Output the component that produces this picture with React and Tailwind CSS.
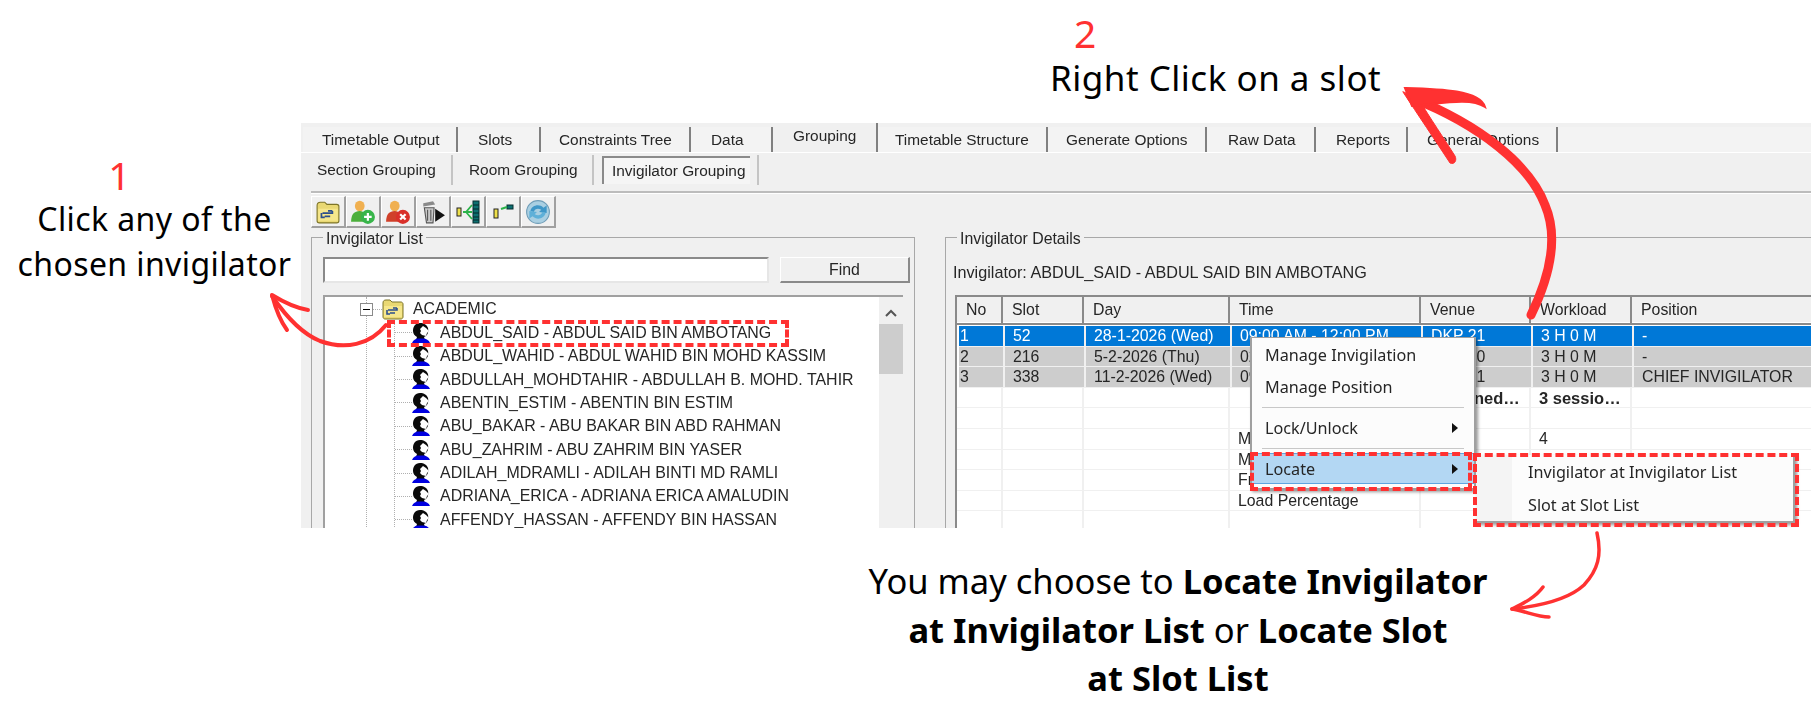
const topTabs = [
  { label: 'Timetable Output', w: 'w-[155px]', pl: 'pl-[19px]' },
  { label: 'Slots', w: 'w-[83px]', pl: 'pl-[20px]' },
  { label: 'Constraints Tree', w: 'w-[150px]', pl: 'pl-[18px]' },
  { label: 'Data', w: 'w-[82px]', pl: 'pl-[20px]' },
  { label: 'Grouping', w: 'w-[105px]', pl: 'pl-[20px]', active: true },
  { label: 'Timetable Structure', w: 'w-[170px]', pl: 'pl-[17px]' },
  { label: 'Generate Options', w: 'w-[159px]', pl: 'pl-[18px]' },
  { label: 'Raw Data', w: 'w-[109px]', pl: 'pl-[21px]' },
  { label: 'Reports', w: 'w-[92px]', pl: 'pl-[20px]' },
  { label: 'General Options', w: 'w-[150px]', pl: 'pl-[19px]' },
];

const people = [
  'ABDUL_SAID - ABDUL SAID BIN AMBOTANG',
  'ABDUL_WAHID - ABDUL WAHID BIN MOHD KASSIM',
  'ABDULLAH_MOHDTAHIR - ABDULLAH B. MOHD. TAHIR',
  'ABENTIN_ESTIM - ABENTIN BIN ESTIM',
  'ABU_BAKAR - ABU BAKAR BIN ABD RAHMAN',
  'ABU_ZAHRIM - ABU ZAHRIM BIN YASER',
  'ADILAH_MDRAMLI - ADILAH BINTI MD RAMLI',
  'ADRIANA_ERICA - ADRIANA ERICA AMALUDIN',
  'AFFENDY_HASSAN - AFFENDY BIN HASSAN',
];

const columns = ['No', 'Slot', 'Day', 'Time', 'Venue', 'Workload', 'Position'];

const rows = [
  { cells: ['1', '52', '28-1-2026 (Wed)', '09:00 AM - 12:00 PM', 'DKP 21', '3 H 0 M', '-'], tone: 'selected' },
  { cells: ['2', '216', '5-2-2026 (Thu)', '02:30 PM - 05:30 PM', 'DKP 20', '3 H 0 M', '-'], tone: 'grey' },
  { cells: ['3', '338', '11-2-2026 (Wed)', '09:00 AM - 12:00 PM', 'DKP 21', '3 H 0 M', 'CHIEF INVIGILATOR'], tone: 'grey' },
  { cells: ['', '', '', '', 'Assigned…', '3 sessio…', ''], tone: 'bold' },
  { cells: ['', '', '', '', '', '', ''] },
  { cells: ['', '', '', 'Max Sessions', '', '4', ''] },
  { cells: ['', '', '', 'Min Sessions', '', '', ''] },
  { cells: ['', '', '', 'Free Sessions', '', '', ''] },
  { cells: ['', '', '', 'Load Percentage', '', '', ''] },
  { cells: ['', '', '', '', '', '', ''] },
];

function FolderIcon({ className }) {
  return (
    <svg viewBox="0 0 22 22" className={className}>
      <path d="M1 5 C1 3 2 2 4 2 L8 2 L10 4 L19 4 C20 4 21 5 21 6 L21 19 C21 20 20 21 19 21 L3 21 C2 21 1 20 1 19 Z" fill="#e9d873" stroke="#7d7428" />
      <path d="M2 8 L20 8 L20 19 L2 19 Z" fill="#f6e78c" />
      <path d="M6 12 H15 V10 M15 10 H11 M5 12 V16 H8 M8 15 H13" fill="none" stroke="#2d4f8c" strokeWidth="1.6" />
    </svg>
  );
}

function UserIcon({ body, badge, mark }) {
  return (
    <svg viewBox="0 0 24 24" className="h-[26px] w-[26px]">
      <ellipse cx="9" cy="6.5" rx="4.5" ry="5" fill="#f0b050" />
      <path d="M1 21 C1 14 4 11 9 11 C13 11 16 14 16 21 Z" fill={body} />
      <circle cx="16.5" cy="16.5" r="6.5" fill={badge} />
      <path d={mark} stroke="#fff" strokeWidth="2" />
    </svg>
  );
}

function TrashIcon() {
  return (
    <svg viewBox="0 0 24 24" className="h-[26px] w-[26px]">
      <path d="M3 4 L12 2 L14 5 L3 7 Z" fill="#8a8a8a" />
      <path d="M4 8 H13 L12 22 H6 Z" fill="#c9c9c9" stroke="#555" />
      <path d="M7 10 V20 M10 10 V20" stroke="#555" />
      <path d="M14 9 L23 15 L14 21 Z" fill="#111" />
    </svg>
  );
}

function ManyLinksIcon() {
  return (
    <svg viewBox="0 0 26 24" className="h-[24px] w-[26px]">
      <rect x="2" y="8" width="4" height="8" fill="#eee04a" stroke="#222" />
      <rect x="18" y="1" width="6" height="22" fill="#0c6f70" stroke="#062f30" />
      <path d="M18 5 H24 M18 9 H24 M18 13 H24 M18 17 H24 M18 20 H24" stroke="#04282a" />
      <path d="M8 12 H11 L17 5 M11 12 H17 M11 12 L17 19" stroke="#2bb34a" strokeWidth="1.8" fill="none" />
    </svg>
  );
}

function OneLinkIcon() {
  return (
    <svg viewBox="0 0 26 24" className="h-[24px] w-[26px]">
      <rect x="4" y="9" width="4" height="9" fill="#eee04a" stroke="#222" />
      <rect x="17" y="5" width="6" height="4" fill="#0c6f70" stroke="#062f30" />
      <path d="M11 9 L17 7" stroke="#2bb34a" strokeWidth="2" />
    </svg>
  );
}

function RefreshIcon() {
  return (
    <svg viewBox="0 0 24 24" className="h-[26px] w-[26px]">
      <circle cx="12" cy="12" r="10.5" fill="#a9cfe2" stroke="#6f9db8" />
      <path d="M5 11 C6 6 13 4 17 8 L20 6 L20 13 L13 12 L15 10 C12 8 9 9 8 12 Z" fill="#3f97c8" />
      <path d="M19 13 C18 18 11 20 7 16 L4 18 L4 11 L11 12 L9 14 C12 16 15 15 16 12 Z" fill="#5fb0d8" />
    </svg>
  );
}

function FaceIcon() {
  return (
    <svg viewBox="0 0 18 20" className="h-[20px] w-[18px] shrink-0">
      <path d="M8 0 C3 0 1 4 1 8 C1 11 3 13 5 14 L4 17 H13 L12 14 C15 13 17 10 16 5 C15 2 12 0 8 0 Z" fill="#0a0a0a" />
      <path d="M8 6 L11 3 L14 5 L17 8 L15 10 L14 13 L10 12 L8 10 L9 8 Z" fill="#fff" />
      <path d="M0 20 C1 17 4 15.5 6 15.5 H11 C14 15.5 17 17 18 20 Z" fill="#0000e0" />
    </svg>
  );
}

function ToolButton({ children }) {
  return (
    <div className="flex h-[32px] w-[35px] items-center justify-center border-t border-l border-t-white border-l-white border-r-2 border-b-2 border-r-[#a0a0a0] border-b-[#a0a0a0] bg-[#f0f0f0]">
      {children}
    </div>
  );
}

function InvigilatorList() {
  return (
    <fieldset className="h-[320px] w-[604px] min-w-0 shrink-0 border border-[#a8a8a8] pl-[11px] pt-[10px]">
      <legend className="h-[20px] px-[3px] pt-[2px] leading-[20px]">Invigilator List</legend>
      <div className="flex h-[26px] gap-[11px]">
        <div className="h-full w-[446px] border-2 border-t-[#8a8a8a] border-l-[#8a8a8a] border-r-[#e6e6e6] border-b-[#e6e6e6] bg-white" />
        <button className="h-full w-[130px] border-r-2 border-b-2 border-r-[#8a8a8a] border-b-[#8a8a8a] border-t border-l border-t-white border-l-white bg-[#f0f0f0]">
          Find
        </button>
      </div>
      <div className="relative mt-[12px] flex h-[240px] w-[580px] overflow-hidden border-t-2 border-l-2 border-t-[#a0a0a0] border-l-[#a0a0a0] bg-white">
        <div className="relative flex-1">
          {/* tree guide lines */}
          <div className="absolute left-[41px] top-0 h-full border-l border-dotted border-[#b0b0b0]" />
          <div className="absolute left-[69px] top-[22px] h-full border-l border-dotted border-[#b0b0b0]" />
          <div className="flex h-[24px] items-center">
            <div className="relative ml-[35px] flex h-[13px] w-[13px] items-center justify-center border border-[#8a8a8a] bg-white">
              <div className="h-px w-[7px] bg-black" />
            </div>
            <div className="w-[9px] border-t border-dotted border-[#b0b0b0]" />
            <FolderIcon className="h-[22px] w-[22px]" />
            <span className="ml-[9px]">ACADEMIC</span>
          </div>
          {people.map((name) => (
            <div key={name} className="flex h-[23.4px] items-center pl-[70px]">
              <div className="w-[17px] border-t border-dotted border-[#b0b0b0]" />
              <FaceIcon />
              <span className="ml-[10px] whitespace-nowrap text-[15.95px]">{name}</span>
            </div>
          ))}
        </div>
        <div className="flex w-[24px] shrink-0 flex-col items-center bg-[#f0f0f0]">
          <svg viewBox="0 0 12 8" className="mt-[12px] h-[8px] w-[12px]">
            <path d="M1 7 L6 2 L11 7" fill="none" stroke="#555" strokeWidth="2" />
          </svg>
          <div className="mt-[7px] h-[50px] w-full bg-[#cdcdcd]" />
        </div>
      </div>
    </fieldset>
  );
}

function InvigilatorDetails() {
  const grid = 'grid grid-cols-[46px_81px_146px_191px_110px_101px_1fr]';
  return (
    <fieldset className="-mr-[10px] h-[320px] min-w-0 flex-1 border border-[#a8a8a8] pl-[9px]">
      <legend className="ml-[2px] h-[20px] px-[3px] pt-[2px] leading-[20px]">Invigilator Details</legend>
      <div className="mt-[16px] mb-[14px] h-[18px] -ml-[2px] text-[16.2px] leading-[18px]">Invigilator: ABDUL_SAID - ABDUL SAID BIN AMBOTANG</div>
      <div className="h-[240px] overflow-hidden border-t-2 border-l-2 border-t-[#8a8a8a] border-l-[#8a8a8a] bg-white">
        <div className={`${grid} h-[25px] bg-[#f0f0f0]`}>
          {columns.map((col) => (
            <div key={col} className="border-r-2 border-b-2 border-r-[#8a8a8a] border-b-[#8a8a8a] pl-[9px] leading-[26px]">
              {col}
            </div>
          ))}
        </div>
        <div className="pt-[4px]">
          {rows.map((row, i) => {
            const tone =
              row.tone === 'selected'
                ? 'bg-[#0078d7] text-white ml-[2px]'
                : row.tone === 'grey'
                  ? 'bg-[#cdcdcd] ml-[2px]'
                  : row.tone === 'bold'
                    ? 'font-bold text-[16.5px]'
                    : '';
            return (
              <div key={i} className={`${grid} h-[20.6px] border-b border-[#f0f0f0] ${tone}`}>
                {row.cells.map((cell, j) => (
                  <div
                    key={j}
                    className={`overflow-hidden whitespace-nowrap border-r-2 border-[#f0f0f0] leading-[20px] ${
                      j === 0 ? 'pl-px' : 'pl-[8px]'
                    }`}
                  >
                    {cell}
                  </div>
                ))}
              </div>
            );
          })}
        </div>
      </div>
    </fieldset>
  );
}

function MenuArrow() {
  return (
    <svg viewBox="0 0 6 10" className="h-[10px] w-[6px]">
      <path d="M0 0 L6 5 L0 10 Z" fill="#111" />
    </svg>
  );
}

function ContextMenu() {
  return (
    <div className="absolute left-[949px] top-[214px] h-[153px] w-[226px] border-r-2 border-b-2 border-l-2 border-t border-[#a0a0a0] bg-[#fcfcfc] pt-px font-['Noto_Sans',sans-serif] text-[16.2px] shadow-[2px_2px_3px_rgba(0,0,0,0.4)]">
      <div className="flex h-[32px] items-center pl-[13px]">Manage Invigilation</div>
      <div className="flex h-[32px] items-center pl-[13px]">Manage Position</div>
      <div className="mx-[10px] my-[4px] h-px bg-[#c8c8c8]" />
      <div className="flex h-[32px] items-center justify-between pl-[13px] pr-[16px]">
        Lock/Unlock
        <MenuArrow />
      </div>
      <div className="mx-[10px] my-[4px] h-px bg-[#c8c8c8]" />
      <div className="flex h-[31px] items-center justify-between border-y border-[#5ea6e0] bg-[#b3d7f3] pl-[13px] pr-[16px] pt-px">
        Locate
        <MenuArrow />
      </div>
    </div>
  );
}

function SubMenu() {
  return (
    <div className="absolute left-[1175px] top-[332px] h-[68px] w-[319px] border-r-2 border-b-2 border-[#a0a0a0] bg-[#fcfcfc] font-['Noto_Sans',sans-serif] text-[16.2px] shadow-[2px_2px_3px_rgba(0,0,0,0.4)]">
      <div className="absolute left-0 top-0 h-full w-[36px] bg-[#f4f4f4]" />
      <div className="relative flex h-[34px] items-center pl-[52px]">Invigilator at Invigilator List</div>
      <div className="relative flex h-[32px] items-center pl-[52px]">Slot at Slot List</div>
    </div>
  );
}

function AppPanel() {
  return (
    <div className="relative h-[405px] w-[1510px] overflow-hidden bg-[#f0f0f0] font-['Liberation_Sans',sans-serif] text-[15.85px] text-[#262626] blur-[0.4px]">
      {/* main tabs */}
      <div className="flex h-[29px] items-end pl-[2px] text-[15.4px]">
        {topTabs.map((tab) => (
          <div
            key={tab.label}
            className={`${tab.w} ${tab.pl} ${
              tab.active ? 'h-[29px] bg-[#f0f0f0] pt-[2px]' : 'h-[25px] bg-[#f3f3f3] pt-[2px]'
            } shrink-0 border-r-2 border-r-[#808080] leading-[21px]`}
          >
            {tab.label}
          </div>
        ))}
        <div className="h-[25px] flex-1 bg-[#f3f3f3]" />
      </div>
      <div className="h-px bg-white" />
      {/* grouping tabs */}
      <div className="flex h-[38px] items-start pl-[10px] pt-[2px] text-[15.4px]">
        <div className="flex h-[30px] w-[142px] items-center border-r-2 border-[#c4c4c4] pl-[6px]">Section Grouping</div>
        <div className="flex h-[30px] w-[141px] items-center border-r-2 border-[#c4c4c4] pl-[16px]">Room Grouping</div>
        <div className="ml-[8px] mt-px flex h-[28px] w-[148px] items-center border-t-2 border-l-2 border-[#8a8a8a] bg-[#f5f5f5] pl-[8px]">
          Invigilator Grouping
        </div>
        <div className="ml-[7px] h-[30px] border-r-2 border-[#c4c4c4]" />
      </div>
      <div className="ml-[10px] h-[3px] border-t-2 border-b border-t-[#bcbcbc] border-b-white" />
      {/* toolbar */}
      <div className="flex h-[33px] items-start pl-[10px] pt-[2px]">
        <ToolButton><FolderIcon className="h-[24px] w-[24px]" /></ToolButton>
        <ToolButton><UserIcon body="#4caf3c" badge="#38b54a" mark="M13 16.5 H20 M16.5 13 V20" /></ToolButton>
        <ToolButton><UserIcon body="#d0402a" badge="#d9302a" mark="M14 14 L19 19 M19 14 L14 19" /></ToolButton>
        <ToolButton><TrashIcon /></ToolButton>
        <ToolButton><ManyLinksIcon /></ToolButton>
        <ToolButton><OneLinkIcon /></ToolButton>
        <ToolButton><RefreshIcon /></ToolButton>
      </div>
      {/* group boxes */}
      <div className="flex gap-[30px] pl-[10px]">
        <InvigilatorList />
        <InvigilatorDetails />
      </div>
      <div className="absolute left-[86px] top-[197px] h-[27px] w-[402px] border-[4px] border-dashed border-[#ff3131]" />
      <ContextMenu />
      <div className="absolute left-[949px] top-[329px] h-[39px] w-[222px] border-[4px] border-dashed border-[#ff3131]" />
      <SubMenu />
      <div className="absolute left-[1172px] top-[330px] h-[74px] w-[326px] border-[4px] border-dashed border-[#ff3131]" />
    </div>
  );
}

function Arrows() {
  return (
    <svg viewBox="0 0 1811 708" className="pointer-events-none absolute left-0 top-0 h-[708px] w-[1811px]" fill="none" stroke="#ff3131" strokeLinecap="round">
      {/* big arrow from the slot row up to the caption */}
      <path d="M1531 315 C1548 280 1560 240 1545 205 C1530 165 1480 125 1412 98" strokeWidth="9" />
      <path d="M1403 92 C1418 115 1435 140 1450 163 C1455 165 1457 160 1455 156 C1445 140 1430 118 1418 98 Z" fill="#ff3131" strokeWidth="1" />
      <path d="M1405 88 C1440 89 1480 90 1485 107 C1470 97 1440 104 1412 106 Z" fill="#ff3131" strokeWidth="2" />
      {/* arrow from the tree row to the left caption */}
      <path d="M386 325 C370 345 345 350 320 341 C300 333 285 315 272 296" strokeWidth="4" />
      <path d="M272 295 C285 303 296 308 308 310 M272 295 C276 310 281 322 287 330" strokeWidth="4" />
      {/* arrow from the submenu to the bottom caption */}
      <path d="M1597 533 C1602 555 1598 570 1584 585 C1568 600 1540 606 1512 609" strokeWidth="3.5" />
      <path d="M1512 609 C1522 604 1535 598 1543 587 M1512 609 C1525 611 1537 617 1549 617" strokeWidth="3.5" />
    </svg>
  );
}

export default function App() {
  return (
    <div className="relative h-[708px] w-[1811px] overflow-hidden bg-white font-['Noto_Sans',sans-serif] text-black">
      {/* step 2 caption */}
      <div className="flex h-[123px] flex-col items-start pl-[1050px]">
        <div className="mt-[9px] ml-[24px] text-[39px] leading-[48px] text-[#ff3131]">2</div>
        <div className="-mt-[1px] whitespace-nowrap text-[35px] leading-[44px] tracking-[0.5px]">Right Click on a slot</div>
      </div>
      <div className="flex items-start">
        {/* step 1 caption */}
        <div className="h-[405px] w-[301px] shrink-0 pt-[29px] text-center text-[32px] leading-[45px] tracking-[0.4px]">
          <div className="pr-[62px] text-[39px] leading-[46px] text-[#ff3131]">1</div>
          <div className="ml-[8px] -mt-[2px] whitespace-nowrap">Click any of the</div>
          <div className="ml-[8px] whitespace-nowrap">chosen invigilator</div>
        </div>
        <AppPanel />
      </div>
      {/* closing caption */}
      <div className="ml-[828px] w-[700px] pt-[29px] text-center text-[34.5px] leading-[48.5px]">
        You may choose to <b>Locate Invigilator</b>
        <br />
        <b>at Invigilator List</b> or <b>Locate Slot</b>
        <br />
        <b>at Slot List</b>
      </div>
      <Arrows />
    </div>
  );
}
